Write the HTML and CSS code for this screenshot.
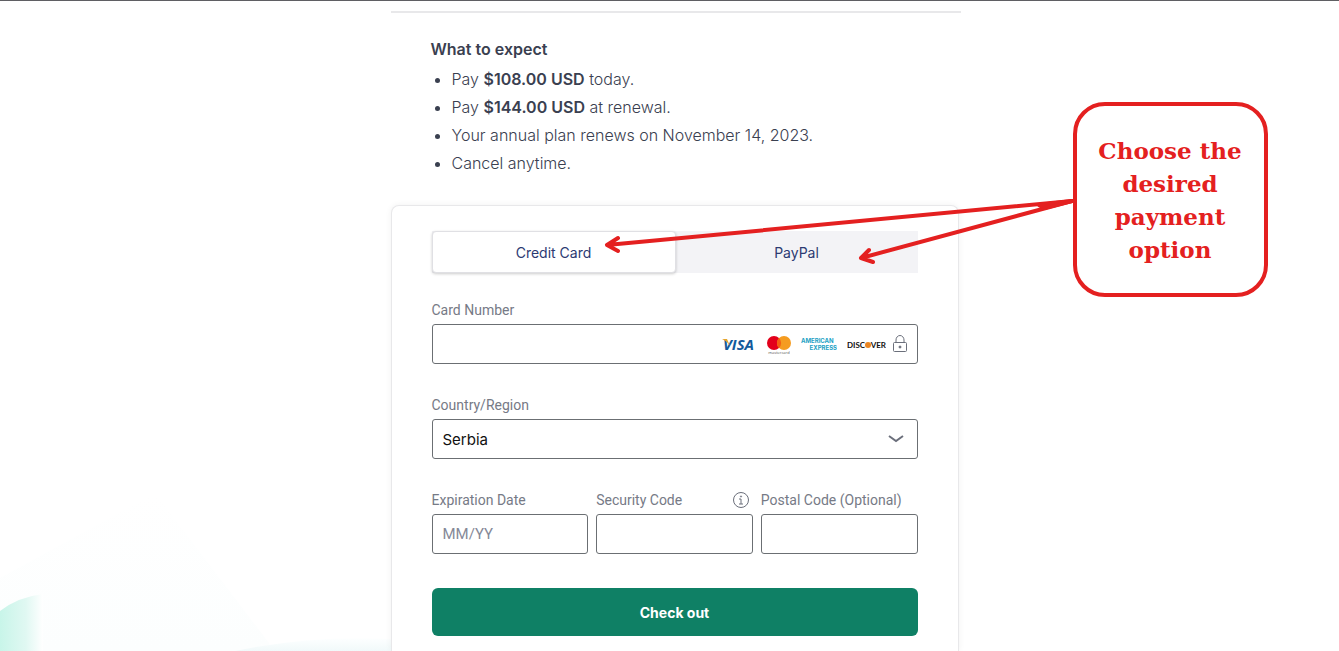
FILE: index.html
```html
<!DOCTYPE html>
<html lang="en">
<head>
	<title>Checkout</title>
	<meta charset="utf-8">
	<meta name="viewport" content="width=device-width, initial-scale=1">
	<link rel="stylesheet" href="styles.css">
</head>
<body>
	<svg class="backdrop" width="392" height="170" viewBox="0 0 392 170" aria-hidden="true">
		<defs>
			<linearGradient id="mint" x1="0" y1="0" x2="1" y2="0">
				<stop offset="0" stop-color="#c8f5e9"/>
				<stop offset="0.6" stop-color="#e0f8f2"/>
				<stop offset="1" stop-color="#fff"/>
			</linearGradient>
			<linearGradient id="haze" x1="0" y1="0" x2="0" y2="1">
				<stop offset="0" stop-color="#fff"/>
				<stop offset="1" stop-color="#fcfefe"/>
			</linearGradient>
			<linearGradient id="sky" x1="0" y1="0" x2="0" y2="1">
				<stop offset="0" stop-color="#fdffff"/>
				<stop offset="1" stop-color="#f1f9fa"/>
			</linearGradient>
		</defs>
		<path d="M0 97 L155 12 L275 170 H0Z" fill="url(#haze)"/>
		<path d="M0 130 Q18 116 43 113 V170 H0Z" fill="url(#mint)"/>
		<path d="M235 170 Q310 154 392 158 V170Z" fill="url(#sky)"/>
	</svg>
	<main class="checkout">
		<section class="expect">
			<h2>What to expect</h2>
			<ul>
				<li>Pay <strong>$108.00 USD</strong> today.</li>
				<li>Pay <strong>$144.00 USD</strong> at renewal.</li>
				<li>Your annual plan renews on November 14, 2023.</li>
				<li>Cancel anytime.</li>
			</ul>
		</section>
		<form class="card">
			<div class="tabs" role="tablist">
				<button type="button" class="tab active" role="tab" aria-selected="true">Credit Card</button>
				<button type="button" class="tab" role="tab" aria-selected="false">PayPal</button>
			</div>
			<div class="field">
				<label for="cardNumber">Card Number</label>
				<div class="control">
					<input type="text" id="cardNumber">
					<div class="brands">
						<svg class="visa" width="35" height="20" viewBox="0 0 35 20">
							<text x="1" y="15">VISA</text>
							<path d="M0 4 H5 L8 11 Q5 6 0 4Z" fill="#e5a52c"/>
						</svg>
						<svg width="24" height="20" viewBox="0 0 24 20">
							<circle cx="7" cy="8" r="7" fill="#e3001b"/>
							<circle cx="17" cy="8" r="7" fill="#f59c20"/>
							<path d="M12 3 A7 7 0 0 1 12 13 A7 7 0 0 1 12 3Z" fill="#f45f12"/>
							<text class="mc" x="12" y="19">mastercard</text>
						</svg>
						<svg class="amex" width="36" height="20" viewBox="0 0 36 20">
							<text x="0" y="8">AMERICAN</text>
							<text x="36" y="15" text-anchor="end">EXPRESS</text>
						</svg>
						<svg class="discover" width="39" height="20" viewBox="0 0 39 20">
							<text x="0" y="13">DISC</text>
							<circle cx="21" cy="10" r="3" fill="#e98522"/>
							<text x="39" y="13" text-anchor="end">VER</text>
						</svg>
						<svg class="line" width="16" height="20" viewBox="0 0 16 20">
							<rect x="1.5" y="7.5" width="13" height="9" rx="1"/>
							<path d="M4 7.500 V5 A4 4.500 0 0 1 12 5 V7.500"/>
							<circle cx="8" cy="12" r="1" fill="#6b6f7b"/>
						</svg>
					</div>
				</div>
			</div>
			<div class="field">
				<label for="country">Country/Region</label>
				<div class="control">
					<select id="country">
						<option>Serbia</option>
					</select>
					<svg class="chevron line" width="16" height="8" viewBox="0 0 16 8">
						<path d="M1 1 L8 6 L15 1"/>
					</svg>
				</div>
			</div>
			<div class="row">
				<div class="field">
					<label for="expiry">Expiration Date</label>
					<input type="text" id="expiry" placeholder="MM/YY">
				</div>
				<div class="field">
					<label for="cvv">Security Code
						<svg class="line" width="18" height="18" viewBox="0 0 18 18">
							<circle cx="9" cy="9" r="7.500"/>
							<path d="M7 8 H9 V13 M7 13 H11"/>
							<circle cx="9" cy="5.500" r="0.600"/>
						</svg>
					</label>
					<input type="text" id="cvv">
				</div>
				<div class="field">
					<label for="postal">Postal Code (Optional)</label>
					<input type="text" id="postal">
				</div>
			</div>
			<button type="submit" class="submit">Check out</button>
		</form>
		<!-- hint bubble with its two arrows -->
		<svg class="arrows" width="470" height="70" viewBox="0 0 470 70" aria-hidden="true">
			<path d="M468 6 L3 50 M14 43 L3 50 L14 56"/>
			<path d="M468 6 L257 63 M265 55 L257 63 L269 67"/>
			<path d="M468 6 L435 10 L440 13Z" fill="#e42020"/>
		</svg>
		<p class="hint">Choose the desired payment option</p>
	</main>
</body>
</html>
```
FILE: styles.css
```css
*{
	box-sizing: border-box;
}
body{
	display: flex;
	flex-direction: column;
	position: relative;
	min-height: 100vh;
	margin: 0;
	border-top: 1px solid #5f5f63;
	background: #fff;
	color: #3a4050;
	font-family: Inter, "Liberation Sans", sans-serif;
	font-size: 16px;
	line-height: 28px;
}
.backdrop{
	position: absolute;
	left: 0;
	bottom: 0;
}
.checkout{
	display: flex;
	flex: 1;
	flex-direction: column;
	position: relative;
	width: 100%;
	max-width: 570px;
	margin: 0 auto;
	/* the column sits a little right of the middle */
	left: 6px;
	padding-top: 10px;
}
.expect{
	border-top: 2px solid #e8e8ea;
	padding: 22px 40px 28px;
}
.expect h2{
	margin: 0 0 2px;
	font-size: 16px;
	font-weight: 600;
}
.expect ul{
	margin: 0;
	padding-left: 21px;
	font-weight: 300;
}
.expect strong{
	font-weight: 600;
}
.card{
	flex: 1;
	max-width: 568px;
	padding: 25px 40px 0;
	border: 1px solid #e8e8ea;
	border-bottom: 0;
	border-radius: 8px 8px 0 0;
	background: #fff;
	box-shadow: 0 0 6px rgba(0, 0, 0, 0.06);
}
.tabs{
	display: flex;
	height: 42px;
	margin-bottom: 23px;
	background: #f3f3f6;
}
.tab{
	flex: 1;
	border: 0;
	background: transparent;
	color: #2c3a72;
	font: 14px Inter, sans-serif;
}
.tab.active{
	border: 1px solid #e0e0e4;
	border-radius: 4px;
	background: #fff;
	box-shadow: 0 1px 3px rgba(0, 0, 0, 0.2);
}
.field{
	margin-bottom: 27px;
}
.field label{
	display: flex;
	justify-content: space-between;
	align-items: center;
	height: 28px;
	color: #767a86;
	font-family: Roboto, sans-serif;
	font-size: 14px;
	white-space: nowrap;
}
.field label svg{
	margin-right: 3px;
}
.field input,
.field select{
	display: block;
	width: 100%;
	height: 40px;
	padding: 0 10px;
	border: 1px solid #6b6f73;
	border-radius: 3px;
	background: #fff;
	color: #111;
	font: 15px Inter, sans-serif;
	appearance: none;
}
.field input{
	font-family: Roboto, sans-serif;
}
.field input::placeholder{
	color: #858997;
}
.control{
	position: relative;
}
.brands{
	position: absolute;
	right: 10px;
	top: 11px;
	display: flex;
	gap: 10px;
}
.brands text{
	font-family: "Open Sans", sans-serif;
	font-weight: 700;
}
.brands svg:last-child{
	margin-left: -4px;
}
.visa text{
	font-size: 15px;
	font-style: italic;
	fill: #125a9c;
}
.brands .mc{
	font-size: 4px;
	font-weight: 400;
	text-anchor: middle;
	fill: #555;
}
.amex text{
	font-family: Inter, sans-serif;
	font-size: 6px;
	fill: #1c9fc4;
}
.discover text{
	font-family: Lato, sans-serif;
	font-size: 8px;
	fill: #111;
}
.line{
	fill: none;
	stroke: #6b6f7b;
	stroke-width: 1;
}
.chevron{
	position: absolute;
	right: 14px;
	top: 16px;
	stroke-width: 2;
	pointer-events: none;
}
.row{
	display: grid;
	grid-template-columns: repeat(3, 1fr);
	gap: 8px;
}
.row .field{
	margin-bottom: 34px;
}
.submit{
	display: block;
	width: 100%;
	height: 48px;
	border: 0;
	border-radius: 6px;
	background: #0f8065;
	color: #fff;
	font: 700 14px Inter, sans-serif;
}
.arrows{
	position: absolute;
	left: 213px;
	top: 194px;
	fill: none;
	stroke: #e42020;
	stroke-width: 4;
	stroke-linecap: round;
	stroke-linejoin: round;
}
.hint{
	position: absolute;
	left: 682px;
	top: 101px;
	display: flex;
	align-items: center;
	width: 195px;
	height: 195px;
	margin: 0;
	padding: 0 16px;
	border: 4px solid #e42020;
	border-radius: 32px;
	background: #fff;
	color: #e42020;
	font-family: "DejaVu Serif", serif;
	font-size: 23px;
	font-weight: 700;
	line-height: 33px;
	text-align: center;
}
```
